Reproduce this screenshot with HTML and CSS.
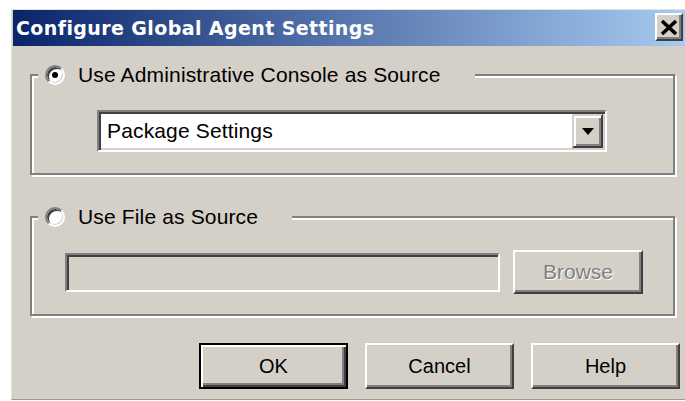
FILE: index.html
```html
<!DOCTYPE html>
<html>
<head>
<meta charset="utf-8">
<title>Configure Global Agent Settings</title>
<link rel="stylesheet" href="styles.css">
</head>
<body>
<div class="window">
  <div class="titlebar">
    <span class="title">Configure Global Agent Settings</span>
    <button class="close" aria-label="Close">
      <svg width="18" height="15" viewBox="0 0 18 15"><path d="M2 1 L16 14 M16 1 L2 14" stroke="#000" stroke-width="3.6" fill="none"/></svg>
    </button>
  </div>
  <div class="client">
    <div class="group group-console">
      <div class="legend legend-console">
        <span class="radio checked"></span>
        <span class="label">Use Administrative Console as Source</span>
      </div>
      <div class="combo">
        <span class="combo-text">Package Settings</span>
        <span class="combo-btn">
          <svg width="12" height="7" viewBox="0 0 12 7"><path d="M0 0 H12 L6 7 Z" fill="#000"/></svg>
        </span>
      </div>
    </div>
    <div class="group group-file">
      <div class="legend legend-file">
        <span class="radio"></span>
        <span class="label">Use File as Source</span>
      </div>
      <div class="file-row">
        <div class="field disabled"></div>
        <button class="btn browse" disabled>Browse</button>
      </div>
    </div>
    <div class="actions">
      <button class="btn default">OK</button>
      <button class="btn">Cancel</button>
      <button class="btn">Help</button>
    </div>
  </div>
</div>
</body>
</html>
```
FILE: styles.css
```css
html, body {
  margin: 0;
  padding: 0;
}

body {
  background: #fff;
  width: 685px;
  height: 401px;
  overflow: hidden;
  font-family: "Liberation Sans", Arial, sans-serif;
  font-size: 21px;
  letter-spacing: 0.15px;
  color: #000;
}

.window {
  margin: 9px 0 0 11px;
  width: 674px;
  height: 391px;
  box-sizing: border-box;
  background: #d4d0c8;
  border-top: 1px solid #e4e1dc;
  border-left: 1px solid #e4e1dc;
  border-bottom: 1px solid #9a9892;
  padding-left: 1px;
}

/* caption bar with the classic two-tone gradient */
.titlebar {
  height: 36px;
  display: flex;
  align-items: flex-start;
  justify-content: space-between;
  background: linear-gradient(to right, #0a246a 0%, #a6caf0 100%);
}

.title {
  color: #fff;
  font-family: "DejaVu Sans", "Liberation Sans", sans-serif;
  font-weight: bold;
  font-size: 19px;
  letter-spacing: 0.4px;
  line-height: 36px;
  padding-left: 3px;
  white-space: nowrap;
}

.close {
  margin: 3px 2px 0 0;
  width: 28px;
  height: 28px;
  padding: 0;
  box-sizing: border-box;
  background: #d4d0c8;
  border: 2px solid;
  border-color: #fff #404040 #404040 #fff;
  box-shadow: inset -2px -2px 0 #808080;
  display: flex;
  align-items: center;
  justify-content: center;
}

.client {
  padding-top: 28px;
}

/* etched group frame */
.group {
  margin-left: 17px;
  width: 645px;
  box-sizing: border-box;
  border: 2px solid #808080;
  box-shadow: inset 2px 2px 0 #fff, 2px 2px 0 #fff;
}

.group-console {
  height: 101px;
}

.group-file {
  margin-top: 41px;
  height: 100px;
}

.legend {
  margin: -12px 0 0 6px;
  height: 22px;
  box-sizing: border-box;
  padding-left: 7px;
  display: flex;
  align-items: center;
  gap: 13px;
  background: #d4d0c8;
  white-space: nowrap;
}

.legend-console {
  width: 437px;
}

.legend-file {
  width: 254px;
}

.radio {
  position: relative;
  flex: none;
  width: 20px;
  height: 20px;
  box-sizing: border-box;
  border-radius: 50%;
  background: #fff;
  border: 2px solid;
  border-color: #808080 #fff #fff #808080;
  box-shadow: inset 2px 2px 0 #404040, inset -1px -1px 0 #d4d0c8;
}

.radio.checked::after {
  content: "";
  position: absolute;
  left: 5px;
  top: 5px;
  width: 6px;
  height: 6px;
  border-radius: 50%;
  background: #000;
}

.label {
  line-height: 22px;
}

/* sunken 3D edge shared by combo and edit field */
.combo,
.field {
  box-sizing: border-box;
  border: 2px solid;
  border-color: #808080 #fff #fff #808080;
  box-shadow: inset 2px 2px 0 #404040, inset -2px -2px 0 #d4d0c8;
}

.combo {
  margin: 24px 0 0 65px;
  width: 510px;
  height: 42px;
  padding: 2px;
  background: #fff;
  display: flex;
  align-items: center;
  justify-content: space-between;
}

.combo-text {
  padding-left: 6px;
}

.combo-btn {
  width: 31px;
  height: 34px;
  box-sizing: border-box;
  background: #d4d0c8;
  border: 2px solid;
  border-color: #d4d0c8 #404040 #404040 #d4d0c8;
  box-shadow: inset 2px 2px 0 #fff, inset -2px -2px 0 #808080;
  display: flex;
  align-items: center;
  justify-content: center;
}

.file-row {
  margin: 22px 0 0 33px;
  display: flex;
  align-items: flex-start;
  gap: 13px;
}

.field {
  margin-top: 3px;
  width: 435px;
  height: 39px;
  background: #d4d0c8;
}

/* raised push buttons */
.btn {
  font-family: "Liberation Sans", Arial, sans-serif;
  font-size: 20px;
  color: #000;
  width: 149px;
  height: 46px;
  padding: 0;
  box-sizing: border-box;
  background: #d4d0c8;
  border: 2px solid;
  border-color: #fff #404040 #404040 #fff;
  box-shadow: inset -2px -2px 0 #808080;
}

.browse {
  width: 130px;
  height: 44px;
  font-size: 21px;
  color: #808080;
  text-shadow: 1px 1px 0 #fff;
}

.btn.default {
  border: 2px solid #000;
  box-shadow: inset 2px 2px 0 #fff, inset -2px -2px 0 #404040, inset -4px -4px 0 #808080;
}

.actions {
  margin: 27px 0 0 186px;
  display: flex;
  gap: 17px;
}
```
